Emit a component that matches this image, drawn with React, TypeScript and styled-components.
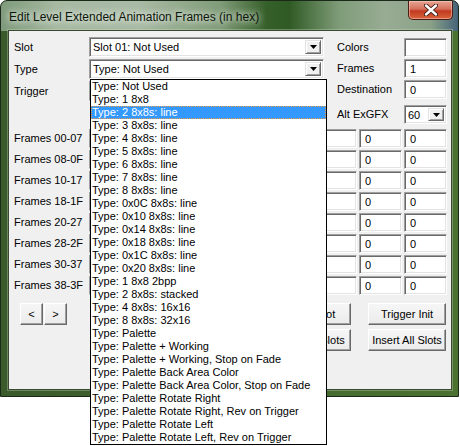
import styled, { createGlobalStyle } from "styled-components";

const GlobalStyle = createGlobalStyle`
  html, body {
    margin: 0;
    padding: 0;
    background: #fff;
  }
  body {
    font-family: "Liberation Sans", Arial, sans-serif;
    font-size: 11px;
    color: #000;
  }
  #root {
    min-height: 446px;
  }
`;

const typeOptions = [
  "Type: Not Used",
  "Type: 1 8x8",
  "Type: 2 8x8s: line",
  "Type: 3 8x8s: line",
  "Type: 4 8x8s: line",
  "Type: 5 8x8s: line",
  "Type: 6 8x8s: line",
  "Type: 7 8x8s: line",
  "Type: 8 8x8s: line",
  "Type: 0x0C 8x8s: line",
  "Type: 0x10 8x8s: line",
  "Type: 0x14 8x8s: line",
  "Type: 0x18 8x8s: line",
  "Type: 0x1C 8x8s: line",
  "Type: 0x20 8x8s: line",
  "Type: 1 8x8 2bpp",
  "Type: 2 8x8s: stacked",
  "Type: 4 8x8s: 16x16",
  "Type: 8 8x8s: 32x16",
  "Type: Palette",
  "Type: Palette + Working",
  "Type: Palette + Working, Stop on Fade",
  "Type: Palette Back Area Color",
  "Type: Palette Back Area Color, Stop on Fade",
  "Type: Palette Rotate Right",
  "Type: Palette Rotate Right, Rev on Trigger",
  "Type: Palette Rotate Left",
  "Type: Palette Rotate Left, Rev on Trigger",
];

const frameRows = ["00-07", "08-0F", "10-17", "18-1F", "20-27", "28-2F", "30-37", "38-3F"];

const Arrow = () => (
  <svg width="7" height="4" viewBox="0 0 7 4">
    <path d="M0 0h7L3.5 4z" fill="#000" />
  </svg>
);

const App = () => {
  return (
    <>
      <GlobalStyle />
      <Window>
        <TitleBar>
          <Title>Edit Level Extended Animation Frames (in hex)</Title>
          <CloseButton>
            <svg width="14" height="12" viewBox="0 0 14 12">
              <path
                d="M2 1.5l10 9M12 1.5l-10 9"
                stroke="#3a1810"
                strokeWidth="4.2"
                strokeLinecap="round"
              />
              <path
                d="M2 1.5l10 9M12 1.5l-10 9"
                stroke="#fff"
                strokeWidth="2.4"
                strokeLinecap="round"
              />
            </svg>
          </CloseButton>
        </TitleBar>
        <Client>
          <TopArea>
            <LeftForm>
              <Label>Slot</Label>
              <Combo>
                <ComboText>Slot 01: Not Used</ComboText>
                <ComboButton>
                  <Arrow />
                </ComboButton>
              </Combo>
              <Label>Type</Label>
              <Combo>
                <ComboText>Type: Not Used</ComboText>
                <ComboButton>
                  <Arrow />
                </ComboButton>
                <DropList>
                  {typeOptions.map((opt, i) => (
                    <ListItem key={opt} $selected={i === 2}>
                      {opt}
                    </ListItem>
                  ))}
                </DropList>
              </Combo>
              <Label>Trigger</Label>
              <Combo>
                <ComboText>None</ComboText>
                <ComboButton>
                  <Arrow />
                </ComboButton>
              </Combo>
            </LeftForm>
            <RightForm>
              <Label>Colors</Label>
              <TextBox />
              <Label>Frames</Label>
              <TextBox>1</TextBox>
              <Label>Destination</Label>
              <TextBox>0</TextBox>
              <Label $end>Alt ExGFX</Label>
              <SmallCombo>
                <ComboText>60</ComboText>
                <ComboButton>
                  <Arrow />
                </ComboButton>
              </SmallCombo>
            </RightForm>
          </TopArea>
          <FramesGrid>
            {frameRows.map((r) => (
              <FrameRow key={r}>
                <Label>Frames {r}</Label>
                {Array.from({ length: 8 }).map((_, i) => (
                  <TextBox key={i}>0</TextBox>
                ))}
              </FrameRow>
            ))}
          </FramesGrid>
          <BottomArea>
            <NavGroup>
              <Button $w={23}>&lt;</Button>
              <Button $w={23}>&gt;</Button>
            </NavGroup>
            <ButtonColumn>
              <Button $w={81}>Insert Slot</Button>
              <Button $w={81}>Clear All Slots</Button>
            </ButtonColumn>
            <ButtonColumn>
              <Button $w={78}>Trigger Init</Button>
              <Button $w={78}>Insert All Slots</Button>
            </ButtonColumn>
          </BottomArea>
        </Client>
      </Window>
    </>
  );
};

const Window = styled.div`
  width: 459px;
  height: 397px;
  box-sizing: border-box;
  border: 1px solid #1b2a18;
  border-radius: 7px 7px 0 0;
  padding: 0 6px 6px 7px;
  display: flex;
  flex-direction: column;
  background:
    linear-gradient(
        90deg,
        #7e9a7b 0%,
        #a6b9a1 12%,
        #a9bba5 30%,
        #809c78 48%,
        #36602a 58%,
        #2f5a24 63%,
        #7f9c79 74%,
        #98ac94 84%,
        #8aa187 94%,
        #45647a 100%
      )
      top / 100% 30px no-repeat,
    linear-gradient(90deg, #3a5a2c 0%, #45652f 50%, #4b7230 100%);
`;

const TitleBar = styled.div`
  height: 29px;
  display: flex;
  align-items: flex-start;
`;

const Title = styled.div`
  font-family: "Liberation Sans", Arial, sans-serif;
  font-size: 12px;
  line-height: 15px;
  margin-top: 9px;
  margin-left: 1px;
  color: #0c160a;
  text-shadow: 0 0 6px rgba(255, 255, 255, 0.9), 0 0 10px rgba(255, 255, 255, 0.7);
`;

const CloseButton = styled.div`
  margin-left: auto;
  margin-right: -1px;
  width: 45px;
  height: 19px;
  box-sizing: border-box;
  border: 1px solid #4a1e14;
  border-top: none;
  border-radius: 0 0 5px 5px;
  background: linear-gradient(180deg, #e8a494 0%, #d5705c 45%, #c2391f 55%, #d8643c 100%);
  box-shadow: inset 0 0 0 1px rgba(255, 220, 210, 0.45);
  display: flex;
  align-items: center;
  justify-content: center;
`;

const Client = styled.div`
  flex: 1;
  background: #f0f0f0;
  border: 1px solid #3a4834;
  box-shadow: 0 0 0 1px rgba(200, 220, 190, 0.35);
  padding: 6px 5px 0 5px;
  display: flex;
  flex-direction: column;
`;

const TopArea = styled.div`
  display: flex;
  align-items: flex-start;
`;

const LeftForm = styled.div`
  display: grid;
  grid-template-columns: 75px 235px;
  grid-template-rows: repeat(3, 20px);
  row-gap: 2px;
  align-items: center;
`;

const RightForm = styled.div`
  margin-left: 13px;
  margin-top: 1px;
  display: grid;
  grid-template-columns: 67px 43px;
  grid-template-rows: 19px 19px 19px 23px;
  row-gap: 2px;
  align-items: center;
`;

const Label = styled.div<{ $end?: boolean }>`
  white-space: nowrap;
  line-height: 13px;
  ${(p) => (p.$end ? "align-self: end; margin-bottom: 3px;" : "")}
`;

const sunken = `
  box-sizing: border-box;
  background: #fff;
  border: 1px solid;
  border-color: #a0a0a0 #fff #fff #a0a0a0;
  box-shadow: inset 1px 1px #696969, inset -1px -1px #e3e3e3;
`;

const Combo = styled.div`
  ${sunken}
  position: relative;
  height: 20px;
  display: flex;
  align-items: stretch;
  padding: 2px;
`;

const SmallCombo = styled(Combo)`
  height: 19px;
  align-self: end;
`;

const ComboText = styled.div`
  flex: 1;
  padding-left: 1px;
  line-height: 15px;
  white-space: nowrap;
  overflow: hidden;
`;

const ComboButton = styled.div`
  width: 16px;
  box-sizing: border-box;
  background: #f0f0f0;
  border: 1px solid;
  border-color: #e3e3e3 #696969 #696969 #e3e3e3;
  box-shadow: inset 1px 1px #fff, inset -1px -1px #a0a0a0;
  display: flex;
  align-items: center;
  justify-content: center;
`;

const DropList = styled.div`
  position: absolute;
  left: 0;
  top: calc(100% + 1px);
  width: 237px;
  box-sizing: border-box;
  border: 1px solid #000;
  background: #fff;
  z-index: 10;
`;

const ListItem = styled.div<{ $selected?: boolean }>`
  height: 13px;
  line-height: 13px;
  padding-left: 1px;
  white-space: nowrap;
  box-sizing: border-box;
  ${(p) =>
    p.$selected
      ? `
    background: #3399ff;
    color: #fff;
    outline: 1px dotted #e89a4a;
    outline-offset: -1px;
  `
      : ""}
`;

const TextBox = styled.div`
  ${sunken}
  height: 19px;
  padding: 2px 0 0 5px;
  line-height: 14px;
`;

const FramesGrid = styled.div`
  margin-top: 5px;
  display: flex;
  flex-direction: column;
  gap: 2px;
`;

const FrameRow = styled.div`
  display: grid;
  grid-template-columns: 73px repeat(8, 43px);
  column-gap: 2px;
  grid-template-rows: 19px;
  align-items: center;
`;

const BottomArea = styled.div`
  margin-top: 8px;
  display: flex;
  align-items: flex-start;
`;

const NavGroup = styled.div`
  display: flex;
  gap: 1px;
  margin-left: 6px;
  margin-right: auto;
`;

const ButtonColumn = styled.div`
  display: flex;
  flex-direction: column;
  gap: 4px;
  & + & {
    margin-left: 17px;
  }
`;

const Button = styled.div<{ $w: number }>`
  width: ${(p) => p.$w}px;
  height: 22px;
  box-sizing: border-box;
  border: 1px solid;
  border-color: #fff #696969 #696969 #fff;
  box-shadow: inset -1px -1px #a0a0a0;
  background: linear-gradient(180deg, #f6f6f6, #ebebeb);
  display: flex;
  align-items: center;
  justify-content: center;
  white-space: nowrap;
  line-height: 13px;
`;

export default App;
